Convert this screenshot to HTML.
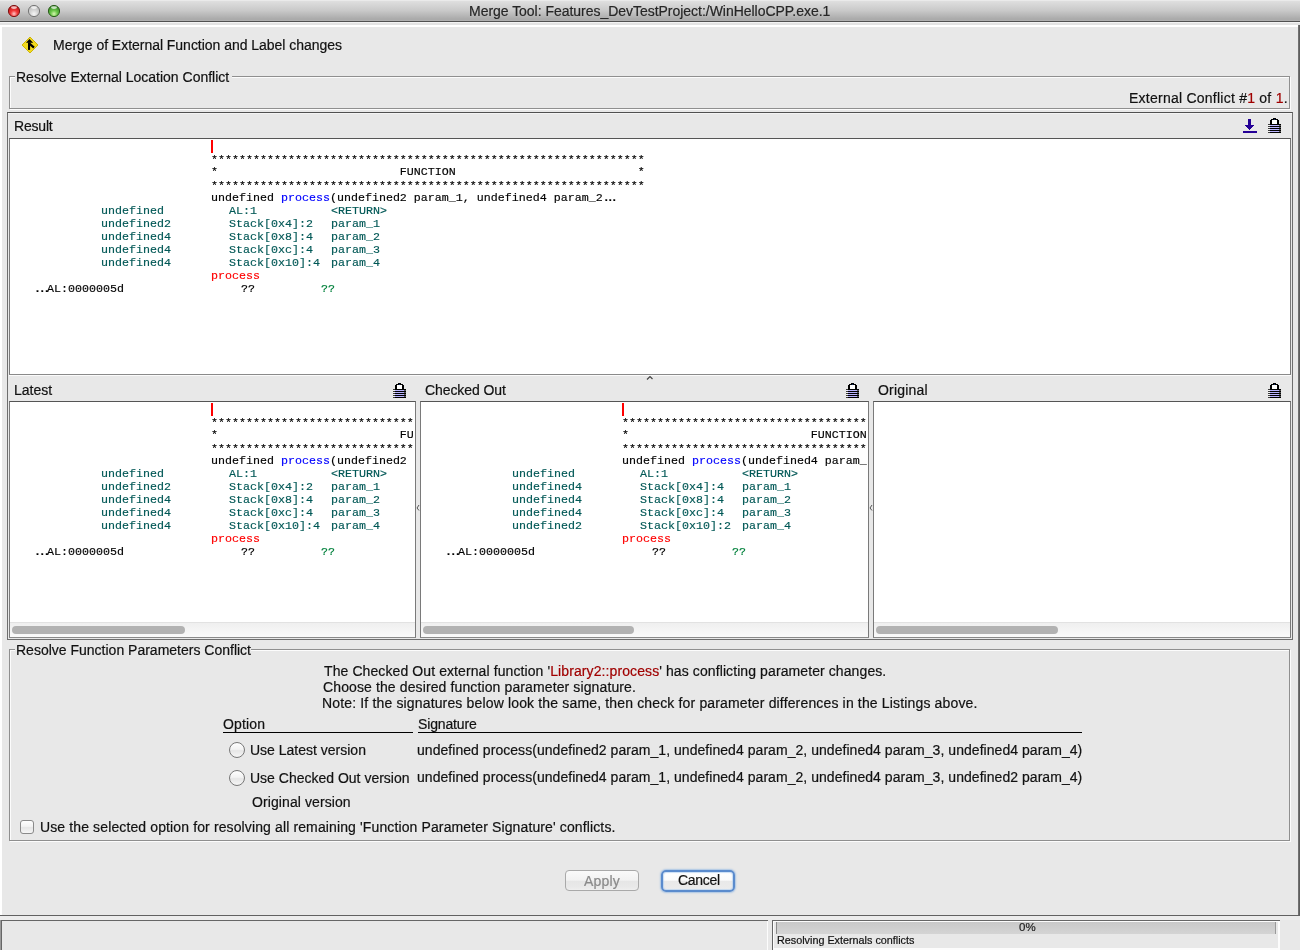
<!DOCTYPE html>
<html><head><meta charset="utf-8">
<style>
html,body{margin:0;padding:0;}
body{width:1300px;height:950px;position:relative;overflow:hidden;background:#fff;font-family:"Liberation Sans",sans-serif;}
.a{position:absolute;}
.t{position:absolute;white-space:pre;line-height:1;will-change:transform;-webkit-text-stroke:0.2px currentColor;}
.m{font-family:"Liberation Mono",monospace;font-size:11.67px;-webkit-text-stroke:0.16px currentColor;}
.clip{position:absolute;overflow:hidden;}
</style></head><body>
<div class="a" style="left:0px;top:0px;width:1300px;height:21px;background:linear-gradient(#f0f0f0 0px,#dedede 1.5px,#c9c9c9 50%,#a9a9a9 92%,#b3b3b3 100%);"></div>
<div class="a" style="left:0px;top:21px;width:1300px;height:1px;background:#505050;"></div>
<div class="t" style="left:469px;top:4.15px;font-size:14px;letter-spacing:-0.03px;color:#262626;">Merge Tool: Features_DevTestProject:/WinHelloCPP.exe.1</div>
<svg class="a" style="left:0;top:0" width="70" height="21">
<defs>
<radialGradient id="gr" cx="50%" cy="75%" r="65%"><stop offset="0" stop-color="#ffc8c8"/><stop offset="0.45" stop-color="#f23a3a"/><stop offset="1" stop-color="#c41818"/></radialGradient>
<radialGradient id="gy" cx="50%" cy="75%" r="65%"><stop offset="0" stop-color="#f6f6f6"/><stop offset="0.5" stop-color="#d6d6d6"/><stop offset="1" stop-color="#bdbdbd"/></radialGradient>
<radialGradient id="gg" cx="50%" cy="75%" r="65%"><stop offset="0" stop-color="#d6f5b0"/><stop offset="0.45" stop-color="#6cc84a"/><stop offset="1" stop-color="#3c8e28"/></radialGradient>
</defs>
<circle cx="14" cy="11" r="5.6" fill="url(#gr)" stroke="#7e1414" stroke-width="1"/>
<ellipse cx="14" cy="7.6" rx="3" ry="1.3" fill="#fff" opacity="0.7"/>
<circle cx="34" cy="11" r="5.6" fill="url(#gy)" stroke="#777" stroke-width="1"/>
<ellipse cx="34" cy="7.6" rx="3" ry="1.3" fill="#fff" opacity="0.7"/>
<circle cx="54" cy="11" r="5.6" fill="url(#gg)" stroke="#2b5e1c" stroke-width="1"/>
<ellipse cx="54" cy="7.6" rx="3" ry="1.3" fill="#fff" opacity="0.7"/>
</svg>
<div class="a" style="left:0px;top:22px;width:1300px;height:1px;background:#f2f2f2;"></div>
<div class="a" style="left:0px;top:23px;width:1300px;height:2px;background:#e3e3e3;"></div>
<div class="a" style="left:2px;top:27px;width:1296px;height:888px;background:#e8e8e8;"></div>
<div class="a" style="left:1298px;top:25px;width:2px;height:891px;background:linear-gradient(90deg,#7a7a7a,#555);"></div>
<div class="a" style="left:0px;top:915px;width:1300px;height:1px;background:#616161;"></div>
<svg class="a" style="left:21px;top:36px" width="18" height="18" viewBox="0 0 18 18">
<path d="M9 1 L17 9 L9 17 L1 9 Z" fill="#f2da1e" stroke="#c9b000" stroke-width="0.9"/>
<path d="M8.5 3 L12.2 6.8 H5 Z" fill="#000"/>
<rect x="7" y="6.4" width="2.1" height="7.5" fill="#000"/>
<path d="M8.4 7.6 L13 11.6" stroke="#000" stroke-width="2.2"/>
</svg>
<div class="t" style="left:52.5px;top:38.15px;font-size:14px;letter-spacing:-0.03px;color:#111;">Merge of External Function and Label changes</div>
<div class="a" style="left:10px;top:77px;width:1281px;height:33px;border:1px solid #fcfcfc;box-sizing:border-box;"></div>
<div class="a" style="left:9px;top:76px;width:1281px;height:33px;border:1px solid #8f8f8f;box-sizing:border-box;"></div>
<div class="a" style="left:15px;top:70px;width:217px;height:12px;background:#e8e8e8;"></div>
<div class="t" style="left:16px;top:70.15px;font-size:14px;letter-spacing:0px;color:#111;">Resolve External Location Conflict</div>
<div class="t" style="left:1128.7px;top:91.15px;font-size:14px;letter-spacing:0.24px;color:#111;">External Conflict #<span style="color:#a00000">1</span> of <span style="color:#a00000">1</span>.</div>
<div class="a" style="left:7px;top:112px;width:1286px;height:528px;box-sizing:border-box;border-style:solid;border-width:1px;border-color:#505050 #6e6e6e #6e6e6e #6e6e6e;"></div>
<div class="a" style="left:8px;top:113px;width:1284px;height:1px;background:#f4f4f4;"></div>
<div class="t" style="left:14px;top:119.15px;font-size:14px;letter-spacing:-0.2px;color:#111;">Result</div>
<svg class="a" style="left:1243px;top:119px" width="14" height="14" shape-rendering="crispEdges">
<rect x="5" y="0" width="3" height="6" fill="#240096"/>
<rect x="2" y="6" width="9" height="1" fill="#240096"/>
<rect x="3" y="7" width="7" height="1" fill="#240096"/>
<rect x="4" y="8" width="5" height="1" fill="#240096"/>
<rect x="5" y="9" width="3" height="1" fill="#240096"/>
<rect x="6" y="10" width="1" height="1" fill="#240096"/>
<rect x="0" y="12" width="14" height="2" fill="#240096"/>
</svg>
<svg class="a" style="left:1268px;top:118px" width="13" height="15" shape-rendering="crispEdges"><rect x="5" y="0" width="3" height="1" fill="#000"/><rect x="3" y="1" width="7" height="1" fill="#000"/><rect x="6" y="1" width="1" height="1" fill="#0a2a6a"/><rect x="2" y="2" width="2" height="4" fill="#000"/><rect x="9" y="2" width="2" height="4" fill="#000"/><rect x="4" y="2" width="5" height="4" fill="#fff"/><rect x="0" y="6" width="2" height="1" fill="#3a3a3a"/><rect x="2" y="6" width="11" height="1" fill="#000"/><rect x="0" y="7" width="2" height="1" fill="#f4f4f4"/><rect x="2" y="7" width="9" height="1" fill="#bab4ff"/><rect x="11" y="7" width="2" height="1" fill="#5a5a5a"/><rect x="0" y="8" width="2" height="1" fill="#3a3a3a"/><rect x="2" y="8" width="11" height="1" fill="#000"/><rect x="0" y="9" width="2" height="1" fill="#f4f4f4"/><rect x="2" y="9" width="9" height="1" fill="#bab4ff"/><rect x="11" y="9" width="2" height="1" fill="#5a5a5a"/><rect x="0" y="10" width="2" height="1" fill="#3a3a3a"/><rect x="2" y="10" width="11" height="1" fill="#000"/><rect x="0" y="11" width="2" height="1" fill="#f4f4f4"/><rect x="2" y="11" width="9" height="1" fill="#bab4ff"/><rect x="11" y="11" width="2" height="1" fill="#5a5a5a"/><rect x="0" y="12" width="2" height="1" fill="#3a3a3a"/><rect x="2" y="12" width="11" height="1" fill="#000"/><rect x="0" y="13" width="2" height="1" fill="#f4f4f4"/><rect x="2" y="13" width="9" height="1" fill="#bab4ff"/><rect x="11" y="13" width="2" height="1" fill="#5a5a5a"/><rect x="0" y="14" width="2" height="1" fill="#3a3a3a"/><rect x="2" y="14" width="11" height="1" fill="#000"/></svg>
<div class="a" style="left:9px;top:138px;width:1282px;height:237px;background:#fff;box-sizing:border-box;border-style:solid;border-width:1px;border-color:#555 #7a7a7a #8a8a8a #7a7a7a;"></div>
<div class="a" style="left:9px;top:375px;width:1282px;height:1px;background:#fbfbfb;"></div>
<div class="clip" style="left:10px;top:139px;width:1280px;height:235px;">
<div class="a" style="left:201px;top:1px;width:2px;height:13px;background:#f00;"></div>
<div class="t m" style="left:201px;top:16.05px;color:#000;">**************************************************************</div>
<div class="t m" style="left:201px;top:28.05px;color:#000;">*                          FUNCTION                          *</div>
<div class="t m" style="left:201px;top:42.05px;color:#000;">**************************************************************</div>
<div class="t m" style="left:201px;top:54.05px;color:#000;">undefined <span style="color:#0000ff">process</span>(undefined2 param_1, undefined4 param_2<span style="letter-spacing:-3px;font-weight:bold">...</span></div>
<div class="t m" style="left:91px;top:67.05px;color:#005856;">undefined</div>
<div class="t m" style="left:219px;top:67.05px;color:#005856;">AL:1</div>
<div class="t m" style="left:321px;top:67.05px;color:#005856;">&lt;RETURN&gt;</div>
<div class="t m" style="left:91px;top:80.05px;color:#005856;">undefined2</div>
<div class="t m" style="left:219px;top:80.05px;color:#005856;">Stack[0x4]:2</div>
<div class="t m" style="left:321px;top:80.05px;color:#005856;">param_1</div>
<div class="t m" style="left:91px;top:93.05px;color:#005856;">undefined4</div>
<div class="t m" style="left:219px;top:93.05px;color:#005856;">Stack[0x8]:4</div>
<div class="t m" style="left:321px;top:93.05px;color:#005856;">param_2</div>
<div class="t m" style="left:91px;top:106.05px;color:#005856;">undefined4</div>
<div class="t m" style="left:219px;top:106.05px;color:#005856;">Stack[0xc]:4</div>
<div class="t m" style="left:321px;top:106.05px;color:#005856;">param_3</div>
<div class="t m" style="left:91px;top:119.05px;color:#005856;">undefined4</div>
<div class="t m" style="left:219px;top:119.05px;color:#005856;">Stack[0x10]:4</div>
<div class="t m" style="left:321px;top:119.05px;color:#005856;">param_4</div>
<div class="t m" style="left:201px;top:132.05px;color:#f00;">process</div>
<div class="t m" style="left:23.5px;top:145.05px;color:#000;"><span style="letter-spacing:-2.33px;font-weight:bold">...</span></div>
<div class="t m" style="left:37px;top:145.05px;color:#000;">AL:0000005d</div>
<div class="t m" style="left:231px;top:145.05px;color:#000;">??</div>
<div class="t m" style="left:311px;top:145.05px;color:#00803c;">??</div>
</div>
<svg class="a" style="left:646px;top:375px" width="8" height="6"><path d="M1 4.5 L4 1.5 L6.5 4" fill="none" stroke="#444" stroke-width="1.2"/></svg>
<div class="t" style="left:14px;top:383.15px;font-size:14px;letter-spacing:0px;color:#111;">Latest</div>
<svg class="a" style="left:393px;top:383px" width="13" height="15" shape-rendering="crispEdges"><rect x="5" y="0" width="3" height="1" fill="#000"/><rect x="3" y="1" width="7" height="1" fill="#000"/><rect x="6" y="1" width="1" height="1" fill="#0a2a6a"/><rect x="2" y="2" width="2" height="4" fill="#000"/><rect x="9" y="2" width="2" height="4" fill="#000"/><rect x="4" y="2" width="5" height="4" fill="#fff"/><rect x="0" y="6" width="2" height="1" fill="#3a3a3a"/><rect x="2" y="6" width="11" height="1" fill="#000"/><rect x="0" y="7" width="2" height="1" fill="#f4f4f4"/><rect x="2" y="7" width="9" height="1" fill="#bab4ff"/><rect x="11" y="7" width="2" height="1" fill="#5a5a5a"/><rect x="0" y="8" width="2" height="1" fill="#3a3a3a"/><rect x="2" y="8" width="11" height="1" fill="#000"/><rect x="0" y="9" width="2" height="1" fill="#f4f4f4"/><rect x="2" y="9" width="9" height="1" fill="#bab4ff"/><rect x="11" y="9" width="2" height="1" fill="#5a5a5a"/><rect x="0" y="10" width="2" height="1" fill="#3a3a3a"/><rect x="2" y="10" width="11" height="1" fill="#000"/><rect x="0" y="11" width="2" height="1" fill="#f4f4f4"/><rect x="2" y="11" width="9" height="1" fill="#bab4ff"/><rect x="11" y="11" width="2" height="1" fill="#5a5a5a"/><rect x="0" y="12" width="2" height="1" fill="#3a3a3a"/><rect x="2" y="12" width="11" height="1" fill="#000"/><rect x="0" y="13" width="2" height="1" fill="#f4f4f4"/><rect x="2" y="13" width="9" height="1" fill="#bab4ff"/><rect x="11" y="13" width="2" height="1" fill="#5a5a5a"/><rect x="0" y="14" width="2" height="1" fill="#3a3a3a"/><rect x="2" y="14" width="11" height="1" fill="#000"/></svg>
<div class="t" style="left:424.5px;top:383.15px;font-size:14px;letter-spacing:-0.08px;color:#111;">Checked Out</div>
<svg class="a" style="left:846px;top:383px" width="13" height="15" shape-rendering="crispEdges"><rect x="5" y="0" width="3" height="1" fill="#000"/><rect x="3" y="1" width="7" height="1" fill="#000"/><rect x="6" y="1" width="1" height="1" fill="#0a2a6a"/><rect x="2" y="2" width="2" height="4" fill="#000"/><rect x="9" y="2" width="2" height="4" fill="#000"/><rect x="4" y="2" width="5" height="4" fill="#fff"/><rect x="0" y="6" width="2" height="1" fill="#3a3a3a"/><rect x="2" y="6" width="11" height="1" fill="#000"/><rect x="0" y="7" width="2" height="1" fill="#f4f4f4"/><rect x="2" y="7" width="9" height="1" fill="#bab4ff"/><rect x="11" y="7" width="2" height="1" fill="#5a5a5a"/><rect x="0" y="8" width="2" height="1" fill="#3a3a3a"/><rect x="2" y="8" width="11" height="1" fill="#000"/><rect x="0" y="9" width="2" height="1" fill="#f4f4f4"/><rect x="2" y="9" width="9" height="1" fill="#bab4ff"/><rect x="11" y="9" width="2" height="1" fill="#5a5a5a"/><rect x="0" y="10" width="2" height="1" fill="#3a3a3a"/><rect x="2" y="10" width="11" height="1" fill="#000"/><rect x="0" y="11" width="2" height="1" fill="#f4f4f4"/><rect x="2" y="11" width="9" height="1" fill="#bab4ff"/><rect x="11" y="11" width="2" height="1" fill="#5a5a5a"/><rect x="0" y="12" width="2" height="1" fill="#3a3a3a"/><rect x="2" y="12" width="11" height="1" fill="#000"/><rect x="0" y="13" width="2" height="1" fill="#f4f4f4"/><rect x="2" y="13" width="9" height="1" fill="#bab4ff"/><rect x="11" y="13" width="2" height="1" fill="#5a5a5a"/><rect x="0" y="14" width="2" height="1" fill="#3a3a3a"/><rect x="2" y="14" width="11" height="1" fill="#000"/></svg>
<div class="t" style="left:877.5px;top:383.15px;font-size:14px;letter-spacing:0.2px;color:#111;">Original</div>
<svg class="a" style="left:1268px;top:383px" width="13" height="15" shape-rendering="crispEdges"><rect x="5" y="0" width="3" height="1" fill="#000"/><rect x="3" y="1" width="7" height="1" fill="#000"/><rect x="6" y="1" width="1" height="1" fill="#0a2a6a"/><rect x="2" y="2" width="2" height="4" fill="#000"/><rect x="9" y="2" width="2" height="4" fill="#000"/><rect x="4" y="2" width="5" height="4" fill="#fff"/><rect x="0" y="6" width="2" height="1" fill="#3a3a3a"/><rect x="2" y="6" width="11" height="1" fill="#000"/><rect x="0" y="7" width="2" height="1" fill="#f4f4f4"/><rect x="2" y="7" width="9" height="1" fill="#bab4ff"/><rect x="11" y="7" width="2" height="1" fill="#5a5a5a"/><rect x="0" y="8" width="2" height="1" fill="#3a3a3a"/><rect x="2" y="8" width="11" height="1" fill="#000"/><rect x="0" y="9" width="2" height="1" fill="#f4f4f4"/><rect x="2" y="9" width="9" height="1" fill="#bab4ff"/><rect x="11" y="9" width="2" height="1" fill="#5a5a5a"/><rect x="0" y="10" width="2" height="1" fill="#3a3a3a"/><rect x="2" y="10" width="11" height="1" fill="#000"/><rect x="0" y="11" width="2" height="1" fill="#f4f4f4"/><rect x="2" y="11" width="9" height="1" fill="#bab4ff"/><rect x="11" y="11" width="2" height="1" fill="#5a5a5a"/><rect x="0" y="12" width="2" height="1" fill="#3a3a3a"/><rect x="2" y="12" width="11" height="1" fill="#000"/><rect x="0" y="13" width="2" height="1" fill="#f4f4f4"/><rect x="2" y="13" width="9" height="1" fill="#bab4ff"/><rect x="11" y="13" width="2" height="1" fill="#5a5a5a"/><rect x="0" y="14" width="2" height="1" fill="#3a3a3a"/><rect x="2" y="14" width="11" height="1" fill="#000"/></svg>
<div class="a" style="left:9px;top:401px;width:407px;height:237px;background:#fff;box-sizing:border-box;border-style:solid;border-width:1px;border-color:#555 #7a7a7a #8a8a8a #7a7a7a;"></div>
<div class="a" style="left:420px;top:401px;width:449px;height:237px;background:#fff;box-sizing:border-box;border-style:solid;border-width:1px;border-color:#555 #7a7a7a #8a8a8a #7a7a7a;"></div>
<div class="a" style="left:873px;top:401px;width:418px;height:237px;background:#fff;box-sizing:border-box;border-style:solid;border-width:1px;border-color:#555 #7a7a7a #8a8a8a #7a7a7a;"></div>
<div class="clip" style="left:10px;top:402px;width:404px;height:220px;">
<div class="a" style="left:201px;top:1px;width:2px;height:13px;background:#f00;"></div>
<div class="t m" style="left:201px;top:16.05px;color:#000;">**************************************************************</div>
<div class="t m" style="left:201px;top:28.05px;color:#000;">*                          FUNCTION                          *</div>
<div class="t m" style="left:201px;top:42.05px;color:#000;">**************************************************************</div>
<div class="t m" style="left:201px;top:54.05px;color:#000;">undefined <span style="color:#0000ff">process</span>(undefined2 param_1, undefined4 param_2, undefined4 param_3, undefined4 param_4)</div>
<div class="t m" style="left:91px;top:67.05px;color:#005856;">undefined</div>
<div class="t m" style="left:219px;top:67.05px;color:#005856;">AL:1</div>
<div class="t m" style="left:321px;top:67.05px;color:#005856;">&lt;RETURN&gt;</div>
<div class="t m" style="left:91px;top:80.05px;color:#005856;">undefined2</div>
<div class="t m" style="left:219px;top:80.05px;color:#005856;">Stack[0x4]:2</div>
<div class="t m" style="left:321px;top:80.05px;color:#005856;">param_1</div>
<div class="t m" style="left:91px;top:93.05px;color:#005856;">undefined4</div>
<div class="t m" style="left:219px;top:93.05px;color:#005856;">Stack[0x8]:4</div>
<div class="t m" style="left:321px;top:93.05px;color:#005856;">param_2</div>
<div class="t m" style="left:91px;top:106.05px;color:#005856;">undefined4</div>
<div class="t m" style="left:219px;top:106.05px;color:#005856;">Stack[0xc]:4</div>
<div class="t m" style="left:321px;top:106.05px;color:#005856;">param_3</div>
<div class="t m" style="left:91px;top:119.05px;color:#005856;">undefined4</div>
<div class="t m" style="left:219px;top:119.05px;color:#005856;">Stack[0x10]:4</div>
<div class="t m" style="left:321px;top:119.05px;color:#005856;">param_4</div>
<div class="t m" style="left:201px;top:132.05px;color:#f00;">process</div>
<div class="t m" style="left:23.5px;top:145.05px;color:#000;"><span style="letter-spacing:-2.33px;font-weight:bold">...</span></div>
<div class="t m" style="left:37px;top:145.05px;color:#000;">AL:0000005d</div>
<div class="t m" style="left:231px;top:145.05px;color:#000;">??</div>
<div class="t m" style="left:311px;top:145.05px;color:#00803c;">??</div>
</div>
<div class="clip" style="left:421px;top:402px;width:446px;height:220px;">
<div class="a" style="left:201px;top:1px;width:2px;height:13px;background:#f00;"></div>
<div class="t m" style="left:201px;top:16.05px;color:#000;">**************************************************************</div>
<div class="t m" style="left:201px;top:28.05px;color:#000;">*                          FUNCTION                          *</div>
<div class="t m" style="left:201px;top:42.05px;color:#000;">**************************************************************</div>
<div class="t m" style="left:201px;top:54.05px;color:#000;">undefined <span style="color:#0000ff">process</span>(undefined4 param_1, undefined4 param_2, undefined4 param_3, undefined2 param_4)</div>
<div class="t m" style="left:91px;top:67.05px;color:#005856;">undefined</div>
<div class="t m" style="left:219px;top:67.05px;color:#005856;">AL:1</div>
<div class="t m" style="left:321px;top:67.05px;color:#005856;">&lt;RETURN&gt;</div>
<div class="t m" style="left:91px;top:80.05px;color:#005856;">undefined4</div>
<div class="t m" style="left:219px;top:80.05px;color:#005856;">Stack[0x4]:4</div>
<div class="t m" style="left:321px;top:80.05px;color:#005856;">param_1</div>
<div class="t m" style="left:91px;top:93.05px;color:#005856;">undefined4</div>
<div class="t m" style="left:219px;top:93.05px;color:#005856;">Stack[0x8]:4</div>
<div class="t m" style="left:321px;top:93.05px;color:#005856;">param_2</div>
<div class="t m" style="left:91px;top:106.05px;color:#005856;">undefined4</div>
<div class="t m" style="left:219px;top:106.05px;color:#005856;">Stack[0xc]:4</div>
<div class="t m" style="left:321px;top:106.05px;color:#005856;">param_3</div>
<div class="t m" style="left:91px;top:119.05px;color:#005856;">undefined2</div>
<div class="t m" style="left:219px;top:119.05px;color:#005856;">Stack[0x10]:2</div>
<div class="t m" style="left:321px;top:119.05px;color:#005856;">param_4</div>
<div class="t m" style="left:201px;top:132.05px;color:#f00;">process</div>
<div class="t m" style="left:23.5px;top:145.05px;color:#000;"><span style="letter-spacing:-2.33px;font-weight:bold">...</span></div>
<div class="t m" style="left:37px;top:145.05px;color:#000;">AL:0000005d</div>
<div class="t m" style="left:231px;top:145.05px;color:#000;">??</div>
<div class="t m" style="left:311px;top:145.05px;color:#00803c;">??</div>
</div>
<svg class="a" style="left:416px;top:504px" width="4" height="8"><path d="M3 1 L1 4 L3 6.5" fill="none" stroke="#555" stroke-width="1"/></svg>
<svg class="a" style="left:869px;top:504px" width="4" height="8"><path d="M3 1 L1 4 L3 6.5" fill="none" stroke="#555" stroke-width="1"/></svg>
<div class="a" style="left:10px;top:622px;width:405px;height:1px;background:#e2e2e2;"></div>
<div class="a" style="left:10px;top:623px;width:405px;height:14px;background:linear-gradient(#efefef,#fafafa);"></div>
<div class="a" style="left:12px;top:626px;width:173px;height:8px;border-radius:4px;background:#b2b2b2;"></div>
<div class="a" style="left:421px;top:622px;width:447px;height:1px;background:#e2e2e2;"></div>
<div class="a" style="left:421px;top:623px;width:447px;height:14px;background:linear-gradient(#efefef,#fafafa);"></div>
<div class="a" style="left:423px;top:626px;width:211px;height:8px;border-radius:4px;background:#b2b2b2;"></div>
<div class="a" style="left:874px;top:622px;width:416px;height:1px;background:#e2e2e2;"></div>
<div class="a" style="left:874px;top:623px;width:416px;height:14px;background:linear-gradient(#efefef,#fafafa);"></div>
<div class="a" style="left:876px;top:626px;width:182px;height:8px;border-radius:4px;background:#b2b2b2;"></div>
<div class="a" style="left:10px;top:650px;width:1281px;height:192px;border:1px solid #fcfcfc;box-sizing:border-box;"></div>
<div class="a" style="left:9px;top:649px;width:1281px;height:192px;border:1px solid #8f8f8f;box-sizing:border-box;"></div>
<div class="a" style="left:15px;top:643px;width:236px;height:12px;background:#e8e8e8;"></div>
<div class="t" style="left:16px;top:643.15px;font-size:14px;letter-spacing:0px;color:#111;">Resolve Function Parameters Conflict</div>
<div class="t" style="left:323.5px;top:664.15px;font-size:14px;letter-spacing:0.095px;color:#111;">The Checked Out external function '<span style="color:#a00000">Library2::process</span>' has conflicting parameter changes.</div>
<div class="t" style="left:322.7px;top:680.15px;font-size:14px;letter-spacing:0.117px;color:#111;">Choose the desired function parameter signature.</div>
<div class="t" style="left:322px;top:696.15px;font-size:14px;letter-spacing:0.155px;color:#111;">Note: If the signatures below look the same, then check for parameter differences in the Listings above.</div>
<div class="t" style="left:223px;top:717.15px;font-size:14px;letter-spacing:0.15px;color:#111;">Option</div>
<div class="a" style="left:223px;top:732px;width:190px;height:1px;background:#000;"></div>
<div class="t" style="left:417.5px;top:717.15px;font-size:14px;letter-spacing:-0.15px;color:#111;">Signature</div>
<div class="a" style="left:418px;top:732px;width:664px;height:1px;background:#000;"></div>
<div class="a" style="left:229px;top:742px;width:16px;height:16px;border-radius:50%;box-sizing:border-box;border:1px solid #777;background:linear-gradient(#fefefe,#f3f3f3 45%,#e6e6e6 55%,#f6f6f6);"></div>
<div class="t" style="left:250px;top:743.15px;font-size:14px;letter-spacing:0px;color:#111;">Use Latest version</div>
<div class="t" style="left:417px;top:743.15px;font-size:14px;letter-spacing:0.046px;color:#111;">undefined process(undefined2 param_1, undefined4 param_2, undefined4 param_3, undefined4 param_4)</div>
<div class="a" style="left:229px;top:770px;width:16px;height:16px;border-radius:50%;box-sizing:border-box;border:1px solid #777;background:linear-gradient(#fefefe,#f3f3f3 45%,#e6e6e6 55%,#f6f6f6);"></div>
<div class="t" style="left:250px;top:771.15px;font-size:14px;letter-spacing:0px;color:#111;">Use Checked Out version</div>
<div class="t" style="left:417px;top:770.15px;font-size:14px;letter-spacing:0.046px;color:#111;">undefined process(undefined4 param_1, undefined4 param_2, undefined4 param_3, undefined2 param_4)</div>
<div class="t" style="left:251.5px;top:795.15px;font-size:14px;letter-spacing:0.09px;color:#111;">Original version</div>
<div class="a" style="left:20px;top:820px;width:14px;height:14px;border-radius:3px;box-sizing:border-box;border:1px solid #8a8a8a;background:linear-gradient(#fefefe,#f3f3f3 45%,#e6e6e6 55%,#f6f6f6);"></div>
<div class="t" style="left:40px;top:820.15px;font-size:14px;letter-spacing:0.123px;color:#111;">Use the selected option for resolving all remaining 'Function Parameter Signature' conflicts.</div>
<div class="a" style="left:565px;top:870px;width:74px;height:21px;border-radius:4px;box-sizing:border-box;border:1px solid #a9a9a9;background:linear-gradient(#fafafa,#f2f2f2 48%,#e6e6e6 55%,#e9e9e9 85%,#efefef);"></div>
<div class="t" style="left:583.5px;top:874.15px;font-size:14px;letter-spacing:0.2px;color:#8a8a8a;">Apply</div>
<div class="a" style="left:661px;top:869.5px;width:74px;height:22px;border-radius:5px;box-sizing:border-box;border:2px solid #5a8bcd;box-shadow:0 0 1.5px 1px rgba(120,170,225,0.55), inset 0 0 1px 1px rgba(165,200,240,0.6);background:linear-gradient(#ffffff,#fbfbfb 45%,#e9e9e9 52%,#ebebeb 85%,#f0f0f0);"></div>
<div class="t" style="left:677.5px;top:873.15px;font-size:14px;letter-spacing:-0.27px;color:#111;">Cancel</div>
<div class="a" style="left:0px;top:916px;width:1300px;height:34px;background:#e8e8e8;"></div>
<div class="a" style="left:0px;top:916px;width:1300px;height:4px;background:#ececec;"></div>
<div class="a" style="left:0px;top:920px;width:768px;height:1px;background:#666;"></div>
<div class="a" style="left:0px;top:920px;width:1px;height:30px;background:#9a9a9a;"></div>
<div class="a" style="left:1px;top:920px;width:1px;height:30px;background:#666;"></div>
<div class="a" style="left:767px;top:921px;width:1px;height:29px;background:#fcfcfc;"></div>
<div class="a" style="left:772px;top:920px;width:508px;height:1px;background:#666;"></div>
<div class="a" style="left:772px;top:920px;width:1px;height:30px;background:#666;"></div>
<div class="a" style="left:773px;top:921px;width:506px;height:1px;background:#fcfcfc;"></div>
<div class="a" style="left:773px;top:921px;width:1px;height:29px;background:#fcfcfc;"></div>
<div class="a" style="left:1278px;top:921px;width:2px;height:29px;background:#fcfcfc;"></div>
<div class="a" style="left:773px;top:948px;width:507px;height:2px;background:#fcfcfc;"></div>
<div class="a" style="left:776px;top:922px;width:500px;height:12px;background:linear-gradient(#c9c9c9,#d4d4d4);border-left:1px solid #8a8a8a;border-right:1px solid #9a9a9a;box-sizing:border-box;"></div>
<div class="t" style="left:1019px;top:922px;font-size:11.5px;color:#222">0%</div>
<div class="t" style="left:776.5px;top:934.7px;font-size:10.8px;letter-spacing:0px;color:#111">Resolving Externals conflicts</div>
</body></html>
